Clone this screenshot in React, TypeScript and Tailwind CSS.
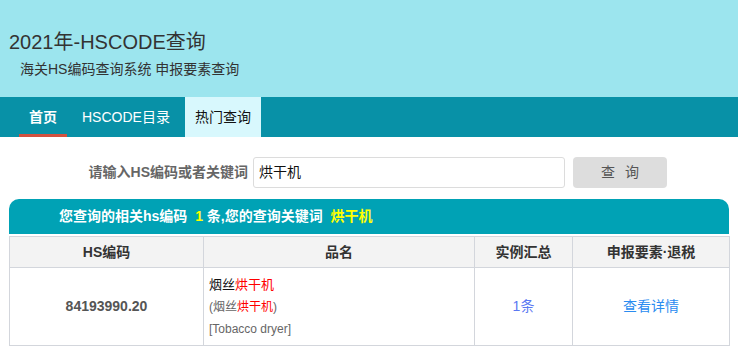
import React from "react";

const F = { fontFamily: '"Liberation Sans", "Noto Sans CJK SC", sans-serif' };

export default function App() {
  return (
    <div className="w-[738px] h-[350px] overflow-hidden bg-white" style={F}>
      <div className="h-[97px] bg-[#9ce5ee] pl-[9px] pt-[28px]">
        <div className="text-[20px] leading-[28px] text-[#333]">2021年-HSCODE查询</div>
        <div className="mt-[3px] pl-[11px] text-[14px] leading-[20px] text-[#333]">海关HS编码查询系统 申报要素查询</div>
      </div>
      <div className="h-[40px] bg-[#0891a7] flex items-stretch pl-[19px] text-[14px]">
        <div className="relative w-[48px] flex items-center justify-center text-white font-bold">
          首页
          <div className="absolute left-0 right-0 bottom-0 h-[3px] bg-[#d2513f]" />
        </div>
        <div className="px-[15px] flex items-center text-white">HSCODE目录</div>
        <div className="px-[10px] flex items-center bg-[#d8f8fd] text-[#111]">热门查询</div>
      </div>
      <div className="mt-[20px] flex items-center h-[31px]">
        <div className="w-[248px] text-right text-[14px] font-bold text-[#666]">请输入HS编码或者关键词</div>
        <div className="ml-[5px] w-[312px] h-[31px] border border-[#dcdcdc] rounded-[3px] flex items-center pl-[5px] text-[14px] text-[#111]">烘干机</div>
        <div className="ml-[8px] w-[94px] h-[31px] bg-[#dddddd] rounded-[4px] flex items-center justify-center text-[14px] text-[#555] tracking-[10px] pl-[10px]">查询</div>
      </div>
      <div className="mt-[11px] mx-[9px] h-[35px] bg-[#00a2b5] rounded-t-[10px] flex items-center pl-[50px] text-[14px] font-bold text-white">
        您查询的相关hs编码&nbsp;&nbsp;<span className="text-[#ffff00]">1</span>&nbsp;条,您的查询关键词&nbsp;&nbsp;<span className="text-[#ffff00]">烘干机</span>
      </div>
      <table className="mt-[2px] ml-[9px] w-[720px] border-collapse table-fixed text-[14px]">
        <colgroup>
          <col className="w-[194px]" />
          <col className="w-[271px]" />
          <col className="w-[98px]" />
          <col className="w-[157px]" />
        </colgroup>
        <thead>
          <tr className="h-[31px] bg-[#f3f3f3] text-[#333] font-bold">
            <th className="border border-[#d3d6dc] text-center">HS编码</th>
            <th className="border border-[#d3d6dc] text-center">品名</th>
            <th className="border border-[#d3d6dc] text-center">实例汇总</th>
            <th className="border border-[#d3d6dc] text-center">申报要素·退税</th>
          </tr>
        </thead>
        <tbody>
          <tr className="h-[78px]">
            <td className="border border-[#d3d6dc] text-center font-bold text-[#555]">84193990.20</td>
            <td className="border border-[#d3d6dc] pl-[5px] align-middle">
              <div className="text-[13px] leading-[22px] text-[#111]">烟丝<span className="text-[#ff0000]">烘干机</span></div>
              <div className="text-[12px] leading-[22px] text-[#666]">(烟丝<span className="text-[#ff0000]">烘干机</span>)</div>
              <div className="text-[12px] leading-[22px] text-[#666]">[Tobacco dryer]</div>
            </td>
            <td className="border border-[#d3d6dc] text-center text-[#5b78f2]">1条</td>
            <td className="border border-[#d3d6dc] text-center text-[#2a8cf0]">查看详情</td>
          </tr>
        </tbody>
      </table>
    </div>
  );
}
